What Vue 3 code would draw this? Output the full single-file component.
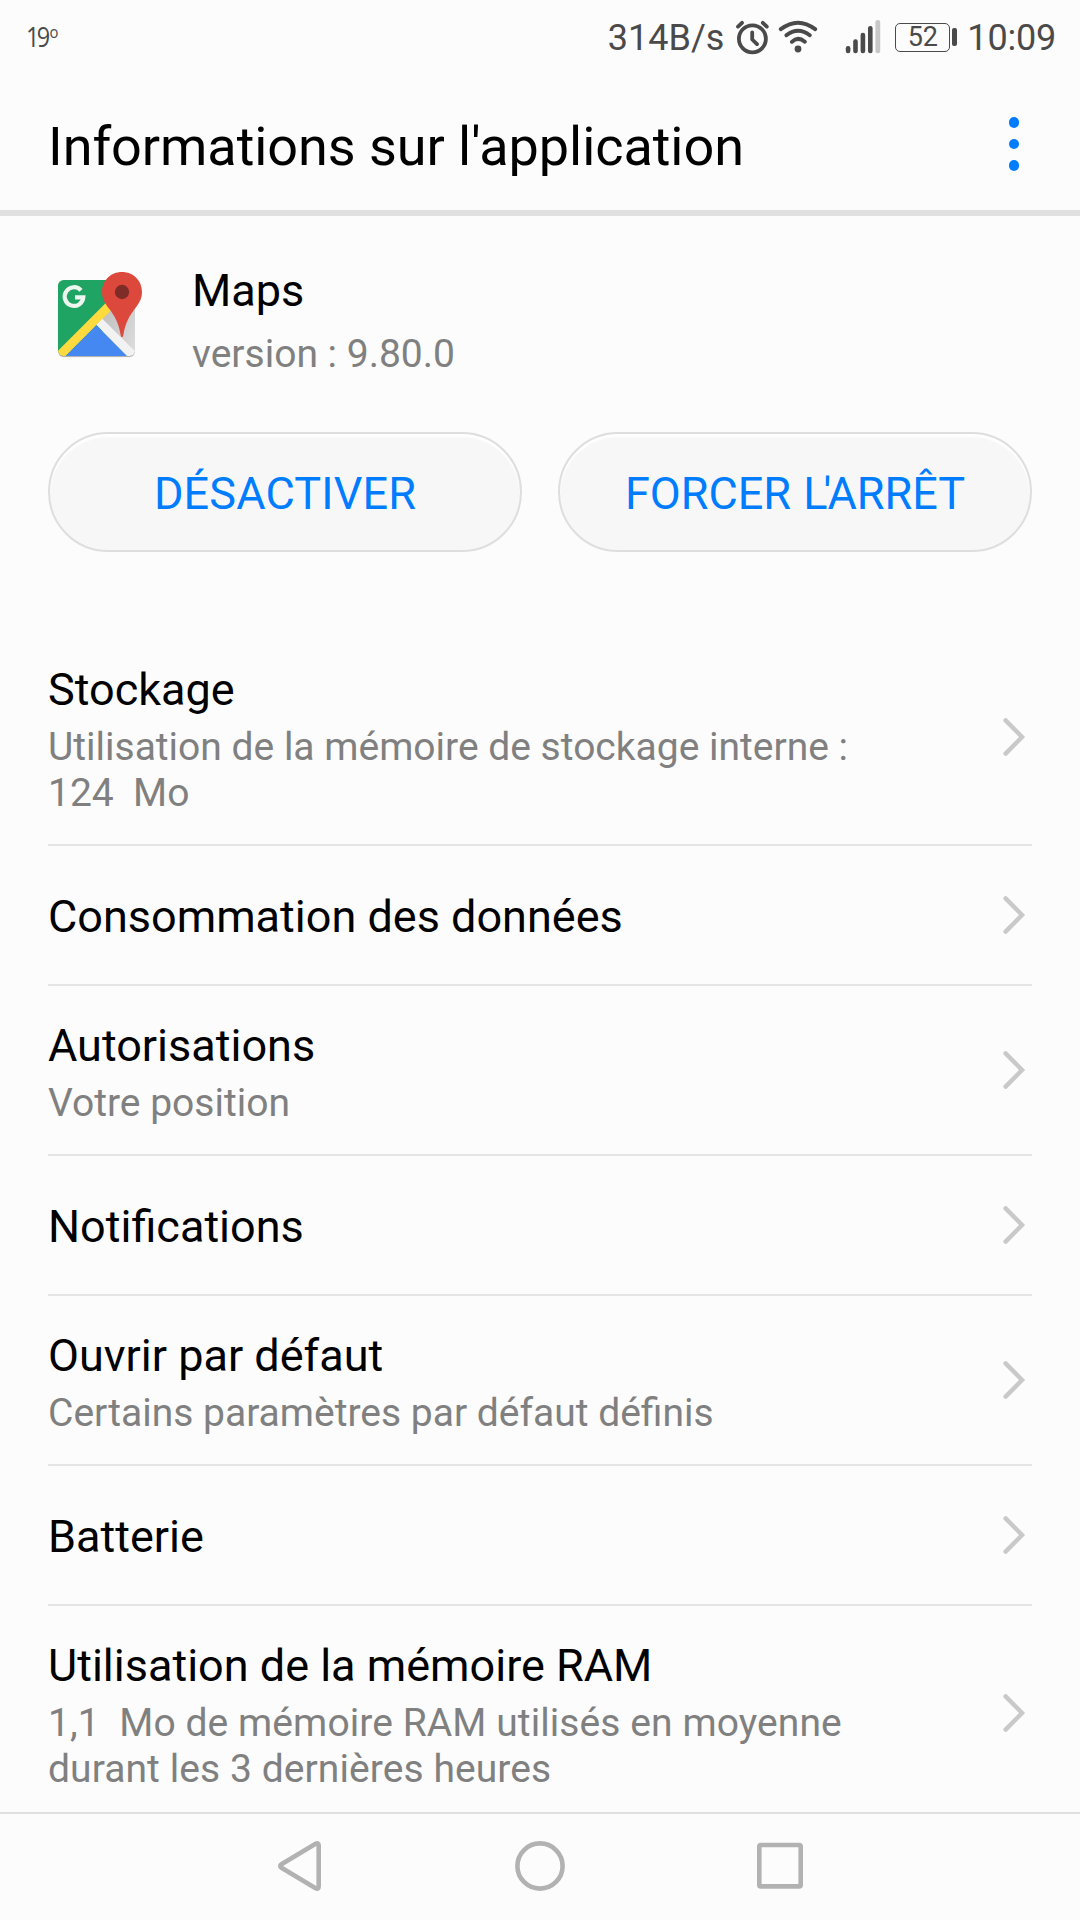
<script setup>
const rows = [
  { title: 'Stockage', lines: ['Utilisation de la mémoire de stockage interne :', '124\u00a0 Mo'] },
  { title: 'Consommation des données', lines: [] },
  { title: 'Autorisations', lines: ['Votre position'] },
  { title: 'Notifications', lines: [] },
  { title: 'Ouvrir par défaut', lines: ['Certains paramètres par défaut définis'] },
  { title: 'Batterie', lines: [] },
  { title: 'Utilisation de la mémoire RAM', lines: ['1,1\u00a0 Mo de mémoire RAM utilisés en moyenne', 'durant les 3 dernières heures'] },
]
</script>

<template>
  <div class="screen">
    <header class="status">
      <span class="temp">19<sup>o</sup></span>
      <div class="status-right">
        <span class="rate">314B/s</span>
        <svg class="alarm" width="34" height="36" viewBox="735 18 34 36" fill="none" stroke="#4a4a4a" stroke-width="3.8" stroke-linecap="round" stroke-linejoin="round">
          <circle cx="752.4" cy="37.8" r="13.5" />
          <path d="M752.2 31.5v7l4.8 4.6M738 25.6l4-3.8M762.8 21.8l4 3.8" />
        </svg>
        <svg class="wifi" width="40" height="36" viewBox="778 18 40 36" fill="none" stroke="#4a4a4a" stroke-width="3.9" stroke-linecap="round">
          <path d="M780.8 28.1Q798 15.2 815.2 28.1M786.4 34.2Q798 25.3 809.8 34.2M791.9 40.8Q798 35 804.8 40.8" />
          <circle cx="798" cy="48" r="3.4" fill="#4a4a4a" stroke="none" />
        </svg>
        <svg class="signal" width="36" height="36" viewBox="845 18 36 36" fill="#4a4a4a">
          <rect x="845.8" y="45" width="4.6" height="7.3" rx="2.2" />
          <rect x="853.2" y="38.3" width="4.6" height="14" rx="2.2" />
          <rect x="860.6" y="31.7" width="4.6" height="20.6" rx="2.2" />
          <rect x="868" y="25" width="4.6" height="27.3" rx="2.2" />
          <rect x="875.4" y="19" width="4.8" height="33.3" rx="2.2" fill="#c8c8c8" />
        </svg>
        <div class="battery"><span>52</span></div>
        <i class="nub"></i>
        <span class="clock">10:09</span>
      </div>
    </header>

    <div class="appbar">
      <h1>Informations sur l'application</h1>
      <div class="more"><i></i><i></i><i></i></div>
    </div>

    <section class="app">
      <svg class="logo" width="130" height="130" viewBox="0 0 390 390">
        <defs>
          <clipPath id="tile"><rect x="54" y="90" width="231" height="228" rx="17" /></clipPath>
          <linearGradient id="shade" x1="0" y1="0" x2="1" y2="1">
            <stop offset="0" stop-color="#b9b9b9" /><stop offset="1" stop-color="#dedede" />
          </linearGradient>
        </defs>
        <rect x="54" y="94" width="231" height="228" rx="17" fill="#000" opacity=".13" />
        <rect x="55" y="93" width="229" height="228" rx="17" fill="#000" opacity=".18" />
        <g clip-path="url(#tile)">
          <rect x="54" y="90" width="231" height="228" fill="#1fa463" />
          <path d="M187 206L285 108V318H187z" fill="url(#shade)" />
          <path d="M54 302L210 146L226 169L75 320H54z" fill="#ffda3e" />
          <path d="M169 224L187 206L290 309L276 320H262z" fill="#f2f2f2" />
          <path d="M76 319L169 226L262 319z" fill="#4688f1" />
        </g>
        <path d="M123 121A28 28 0 1 0 130 142H105" fill="none" stroke="#eef6f0" stroke-width="12.5" />
        <path d="M246 66C212 66 186 92 186 126C186 149 198 164 211 181C231 209 238 230 242 256Q243 262 246 262Q249 262 250 256C254 230 261 209 281 181C294 164 306 149 306 126C306 92 280 66 246 66Z" fill="#dc483c" />
        <circle cx="246" cy="126" r="21.5" fill="#7f2c29" />
      </svg>
      <div class="app-text">
        <div class="app-name">Maps</div>
        <div class="app-version">version : 9.80.0</div>
      </div>
    </section>

    <div class="actions">
      <button class="disable">DÉSACTIVER</button>
      <button>FORCER <span class="tight">L'</span>ARRÊT</button>
    </div>

    <main class="list">
      <div v-for="row in rows" :key="row.title" class="row" :class="{ single: !row.lines.length }">
        <div class="row-text">
          <div class="row-title">{{ row.title }}</div>
          <div v-if="row.lines.length" class="row-desc">
            <div v-for="line in row.lines" :key="line">{{ line }}</div>
          </div>
        </div>
        <svg class="chevron" width="24" height="40" viewBox="0 0 24 40" fill="none" stroke="#c9c9c9" stroke-width="4.4" stroke-linecap="round">
          <path d="M3.6 3.4L20 20L3.6 36.6" stroke-linejoin="miter" />
        </svg>
      </div>
    </main>

    <nav class="navbar">
      <svg width="60" height="60" viewBox="270 1836 60 60"><path d="M281.5 1864.2Q279 1866 281.5 1867.8L315.6 1888.2Q318.7 1889.8 318.7 1886.5V1845.5Q318.7 1842.2 315.6 1843.8Z" /></svg>
      <svg width="60" height="60" viewBox="510 1836 60 60"><circle cx="540" cy="1866" r="22.6" /></svg>
      <svg width="60" height="60" viewBox="750 1836 60 60"><rect x="759.3" y="1845" width="41.4" height="41.4" rx="1.5" /></svg>
    </nav>
  </div>
</template>

<style>
body { background: #fcfcfc; }
</style>

<style scoped>
.screen {
  width: 1080px;
  height: 1920px;
  display: flex;
  flex-direction: column;
  overflow: hidden;
  background: #fcfcfc;
  color: #000;
  font-family: Roboto, "Liberation Sans", sans-serif;
}
.status {
  height: 72px;
  flex: none;
  box-sizing: border-box;
  padding: 2px 24px 0 26px;
  display: flex;
  justify-content: space-between;
  align-items: center;
  color: #4a4a4a;
}
.temp { font: 500 27px/32px "Open Sans", Roboto, sans-serif; letter-spacing: -3px; transform: scaleX(0.87); transform-origin: left; }
.temp sup { font-size: 17px; line-height: 0; vertical-align: 9px; margin-left: 2px; }
.status-right { display: flex; align-items: center; }
.rate, .clock { font-size: 36px; line-height: 42px; padding-top: 1px; }
.alarm { margin-left: 11px; }
.wifi { margin-left: 9px; }
.signal { margin-left: 27px; }
.battery {
  box-sizing: border-box;
  width: 55px;
  height: 29px;
  margin-left: 14px;
  border: 1.6px solid #4a4a4a;
  border-radius: 5px;
  display: flex;
  align-items: center;
  justify-content: center;
  font-size: 27px;
  line-height: 27px;
}
.nub { width: 5px; height: 18px; margin-left: 2px; border-radius: 2px; background: #4a4a4a; }
.clock { margin-left: 10px; letter-spacing: -0.2px; }
.appbar {
  height: 144px;
  flex: none;
  box-sizing: border-box;
  border-bottom: 6px solid #e0e0e0;
  padding: 6px 60.7px 0 48px;
  display: flex;
  align-items: center;
  justify-content: space-between;
}
h1 { margin: 0; padding-top: 5px; font-size: 54px; line-height: 64px; font-weight: 400; letter-spacing: -0.06px; }
.more { display: flex; flex-direction: column; gap: 11px; }
.more i { width: 10.7px; height: 10.7px; border-radius: 50%; background: #007dff; }
.app { display: flex; height: 182px; flex: none; padding: 34px 0 0 40px; box-sizing: border-box; }
.logo { flex: none; }
.app-text { margin-left: 22px; padding-top: 14px; }
.app-name { font-size: 45px; line-height: 53px; }
.app-version { font-size: 39px; line-height: 46px; margin-top: 14px; color: #808080; }
.actions { display: flex; gap: 36px; padding: 34px 48px 0; flex: none; }
button {
  flex: 1;
  height: 120px;
  box-sizing: border-box;
  border: 2px solid #dedede;
  border-radius: 60px;
  background: #f7f7f7;
  box-shadow: inset 0 3px 2px #fff;
  color: #007dff;
  font: 45px/53px Roboto, "Liberation Sans", sans-serif;
  padding: 2px 0 0;
}
.disable { letter-spacing: 0.15px; }
.tight { letter-spacing: -4px; margin-left: 1px; }
.list { margin: 78px 48px 0; flex: 1; min-height: 0; }
.row {
  display: flex;
  justify-content: space-between;
  align-items: center;
  border-bottom: 2px solid #e5e5e5;
  padding-right: 6px;
}
.row:last-child { border-bottom: 0; }
.row-text { padding: 33px 0 28px; }
.single .row-text { padding: 44px 0 41px; }
.row-title { font-size: 45px; line-height: 53px; }
.row-desc { margin-top: 8px; font-size: 39px; line-height: 46px; color: #808080; white-space: nowrap; }
.row:last-child .row-desc { letter-spacing: 0.08px; }
.chevron { flex: none; }
.navbar {
  flex: none;
  height: 108px;
  box-sizing: border-box;
  border-top: 2px solid #e0e0e0;
  padding-bottom: 2px;
  display: flex;
  align-items: center;
  justify-content: center;
  gap: 180px;
}
.navbar svg { fill: none; stroke: #b2b2b2; stroke-width: 4.6; }
</style>
